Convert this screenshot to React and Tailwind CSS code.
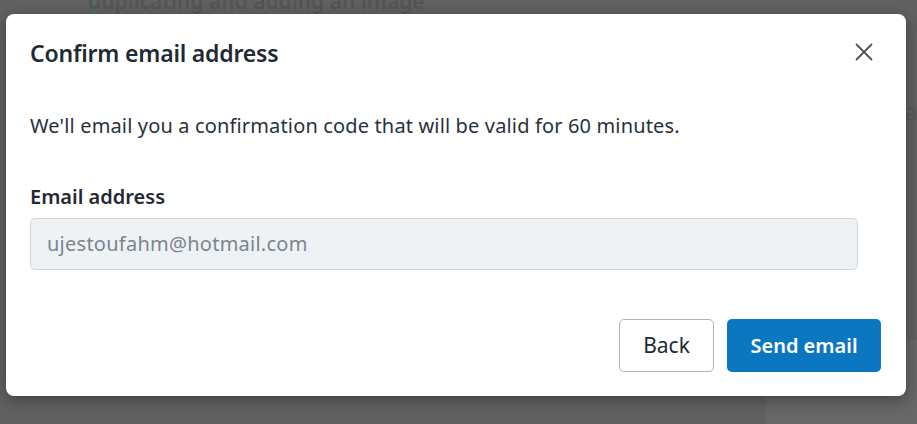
import React from 'react';

function CloseIcon() {
    return (
        <svg width="20" height="20" viewBox="0 0 20 20" fill="none" stroke="#4a5561" strokeWidth="1.8" strokeLinecap="round">
            <path d="M2.5 2.5 L17.5 17.5 M17.5 2.5 L2.5 17.5" />
        </svg>
    );
}

export default function App() {
    return (
        <div className="relative w-[917px] h-[424px] overflow-hidden bg-[#616161]" style={{ fontFamily: '"Noto Sans", "Open Sans", sans-serif' }}>
            {/* page behind the overlay */}
            <div className="absolute left-[90px] top-0 w-[6px] h-[14px] bg-[#5b6a63]"></div>
            <div className="absolute left-[88px] top-[-14px] text-[21px] font-semibold text-[#555555] leading-[30px]">duplicating and adding an image</div>
            <div className="absolute left-[905px] top-[95px] text-[22px] text-[#575757]">a</div>
            <div className="absolute left-[766px] top-[340px] w-[151px] h-[84px] bg-[#676767]"></div>

            {/* dialog */}
            <div className="absolute left-[6px] top-[14px] w-[900px] h-[382px] bg-white rounded-[8px] shadow-[0_4px_16px_rgba(0,0,0,0.35)] px-6 pt-[24px] flex flex-col">
                <div className="flex items-center justify-between">
                    <h2 className="text-[23px] leading-[31px] font-semibold tracking-[-0.2px] text-[#1f2a35]">Confirm email address</h2>
                    <button className="mr-[8px] mt-[-4px]"><CloseIcon /></button>
                </div>
                <p className="mt-[43px] text-[20px] leading-[27px] tracking-[0.15px] text-[#28323c]">We'll email you a confirmation code that will be valid for 60 minutes.</p>
                <label className="mt-[44px] text-[20px] leading-[27px] font-semibold text-[#1f2a35]">Email address</label>
                <div className="mt-[8px] w-[828px] h-[52px] rounded-[5px] border border-[#cfd7de] bg-[#eef2f5] flex items-center px-4 text-[20px] tracking-[0.25px] text-[#7b858e]">
                    ujestoufahm@hotmail.com
                </div>
                <div className="mt-[49px] flex justify-end gap-[13px] pr-[1px]">
                    <button className="w-[95px] h-[53px] rounded-[5px] border border-[#a9b6c2] bg-white text-[21px] text-[#1f2a35]">Back</button>
                    <button className="w-[154px] h-[53px] rounded-[5px] bg-[#0b77c0] text-[20px] font-semibold text-white">Send email</button>
                </div>
            </div>
        </div>
    );
}
